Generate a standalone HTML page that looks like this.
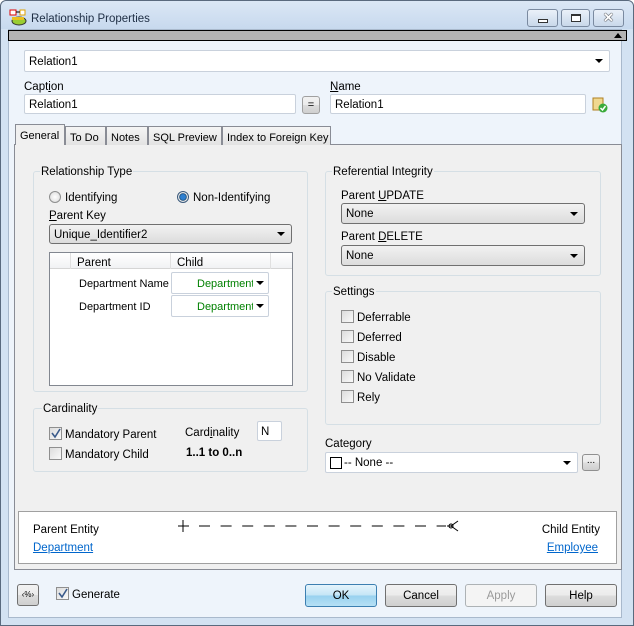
<!DOCTYPE html>
<html><head><meta charset="utf-8"><style>
*{box-sizing:border-box;margin:0;padding:0}
body{width:634px;height:626px;overflow:hidden;font-family:"Liberation Sans",sans-serif;font-size:11.5px;color:#000;background:#fff;white-space:nowrap}
.a{position:absolute}
.win{left:0;top:0;width:634px;height:626px;background:#d3e2f2;border:1px solid #5a6a7e;border-radius:6px 6px 0 0}
.client{left:8px;top:29px;width:614px;height:589px;background:#eef4fb;border:1px solid #a9b9cc}
.tb{border:1px solid #7a8aa0;border-radius:3px;background:linear-gradient(#eaf1f9,#c9d8ea);}
.inp{background:#fff;border:1px solid #c9d1dc;border-radius:2px;padding:4px 4px 0;line-height:13px}
.cb{background:linear-gradient(#f2f2f2,#dcdcdc);border:1px solid #707070;border-radius:3px;padding:4px 4px 0;line-height:12px}
.arr{position:absolute;right:6px;top:50%;margin-top:-2px;width:0;height:0;border-left:4px solid transparent;border-right:4px solid transparent;border-top:4px solid #000}
.grp{border:1px solid #d5dfe5;border-radius:3px}
.gl{background:#f0f0f0;padding:0 1px;line-height:13px}
.chk{width:13px;height:13px;border:1px solid #8f8f8f;background:linear-gradient(135deg,#dcdcdc,#fafafa)}
.btn{border:1px solid #707070;border-radius:3px;background:linear-gradient(#f2f2f2 0,#ebebeb 50%,#dddddd 51%,#cfcfcf);text-align:center;line-height:20px}
.tab{top:126px;height:19px;border:1px solid #898c95;border-bottom:none;background:linear-gradient(#f5f5f5,#e3e3e3);padding:4px 0 0 4px;line-height:14px;overflow:hidden;font-size:11px}
.t{margin-top:1px}
u{text-decoration:underline}
</style></head><body>
<div class="a win"></div>
<div class="a" style="left:1px;top:1px;width:632px;height:28px;background:linear-gradient(#dbe7f5,#c7d9ee);border-radius:6px 6px 0 0"></div>
<svg class="a" style="left:9px;top:9px" width="18" height="18" viewBox="0 0 18 18"><rect x="1" y="1" width="6" height="5" fill="#fff" stroke="#d00"/><rect x="11" y="1" width="5" height="5" fill="#fff" stroke="#e0a000"/><path d="M7 3h4" stroke="#000"/><ellipse cx="10" cy="12" rx="7" ry="4" fill="#9acd32" stroke="#333"/><rect x="3" y="8" width="12" height="3" fill="#e8c020"/></svg>
<div class="a" style="left:31px;top:13px;color:#1e2e44">Relationship Properties</div>
<div class="a tb" style="left:527px;top:9px;width:31px;height:18px"><div class="a" style="left:10px;top:9px;width:10px;height:4px;border:1px solid #333;background:#fff"></div></div>
<div class="a tb" style="left:561px;top:9px;width:29px;height:18px"><div class="a" style="left:9px;top:4px;width:10px;height:8px;border:1px solid #333;border-top-width:2px;background:#fff"></div></div>
<div class="a tb" style="left:593px;top:9px;width:31px;height:18px;text-align:center;font-weight:bold;font-size:13px;line-height:15px;color:#fff;text-shadow:0 0 1px #000,0 0 1px #000">✕</div>
<div class="a client"></div>
<div class="a" style="left:8px;top:30px;width:619px;height:11px;background:#b4b4b4;border:1px solid #000"><div class="a" style="right:4px;top:2px;width:0;height:0;border-left:4px solid transparent;border-right:4px solid transparent;border-bottom:5px solid #000"></div></div>

<div class="a inp" style="left:24px;top:50px;width:586px;height:22px;padding-top:5px">Relation1<div class="arr"></div></div>
<div class="a" style="left:24px;top:81px">Capt<u>i</u>on</div>
<div class="a inp" style="left:24px;top:94px;width:272px;height:20px">Relation1</div>
<div class="a btn" style="left:302px;top:96px;width:18px;height:18px;line-height:16px;font-size:11px;border-color:#a0a0a0">=</div>
<div class="a" style="left:330px;top:81px"><u>N</u>ame</div>
<div class="a inp" style="left:330px;top:94px;width:256px;height:20px">Relation1</div>
<svg class="a" style="left:592px;top:97px" width="16" height="16"><rect x="1" y="1" width="10" height="12" fill="#f0d890" stroke="#b08020"/><circle cx="11" cy="11" r="4.5" fill="#3aaa3a"/><path d="M8.5 11l2 2 3-4" stroke="#fff" stroke-width="1.5" fill="none"/></svg>

<div class="a" style="left:14px;top:144px;width:608px;height:426px;background:#f0f0f0;border:1px solid #898c95"></div>
<div class="a tab" style="left:65px;width:41px">To Do</div>
<div class="a tab" style="left:106px;width:42px">Notes</div>
<div class="a tab" style="left:148px;width:74px">SQL Preview</div>
<div class="a tab" style="left:222px;width:109px">Index to Foreign Key</div>
<div class="a tab" style="left:15px;top:124px;width:50px;height:21px;background:#f0f0f0">General</div>

<div class="a grp" style="left:33px;top:171px;width:275px;height:221px"></div>
<div class="a gl" style="left:40px;top:166px">Relationship Type</div>
<div class="a" style="left:49px;top:191px;width:12px;height:12px;border-radius:50%;border:1px solid #8e8f8f;background:radial-gradient(#fff,#d8d8d8)"></div>
<div class="a" style="left:65px;top:192px">Identifying</div>
<div class="a" style="left:177px;top:191px;width:12px;height:12px;border-radius:50%;border:1px solid #3c5b7d;background:radial-gradient(#2e7fd0 0 2.5px,#16456e 3.5px,#e8e8e8 4px)"></div>
<div class="a" style="left:193px;top:192px">Non-Identifying</div>
<div class="a" style="left:49px;top:210px"><u>P</u>arent Key</div>
<div class="a cb" style="left:49px;top:224px;width:243px;height:20px">Unique_Identifier2<div class="arr"></div></div>
<div class="a" style="left:49px;top:252px;width:244px;height:134px;background:#fff;border:1px solid #828790"></div>
<div class="a" style="left:50px;top:253px;width:242px;height:16px;background:linear-gradient(#fff,#f1f2f4);border-bottom:1px solid #d5d5d5"></div>
<div class="a" style="left:70px;top:253px;width:1px;height:16px;background:#e0e0e0"></div>
<div class="a" style="left:170px;top:253px;width:1px;height:16px;background:#e0e0e0"></div>
<div class="a" style="left:270px;top:253px;width:1px;height:16px;background:#e0e0e0"></div>
<div class="a" style="left:77px;top:257px">Parent</div>
<div class="a" style="left:177px;top:257px">Child</div>
<div class="a" style="left:79px;top:278px;font-size:11px">Department Name</div>
<div class="a" style="left:79px;top:301px;font-size:11px">Department ID</div>
<div class="a inp" style="left:171px;top:272px;width:98px;height:22px;color:#008000;padding:5px 0 0 25px;overflow:hidden;font-size:11px">Department<div class="arr" style="right:4px;box-shadow:0 0 0 3px #fff"></div></div>
<div class="a inp" style="left:171px;top:295px;width:98px;height:22px;color:#008000;padding:5px 0 0 25px;overflow:hidden;font-size:11px">Department<div class="arr" style="right:4px;box-shadow:0 0 0 3px #fff"></div></div>

<div class="a grp" style="left:33px;top:408px;width:275px;height:64px"></div>
<div class="a gl" style="left:42px;top:403px">Cardinality</div>
<div class="a chk" style="left:49px;top:427px"></div><svg class="a" style="left:50px;top:428px" width="11" height="11"><path d="M2 5l3 4 5-8" stroke="#3a5a8a" stroke-width="1.6" fill="none"/></svg>
<div class="a" style="left:65px;top:429px">Mandatory Parent</div>
<div class="a chk" style="left:49px;top:447px"></div>
<div class="a" style="left:65px;top:449px">Mandatory Child</div>
<div class="a" style="left:185px;top:427px">Card<u>i</u>nality</div>
<div class="a inp" style="left:257px;top:421px;width:25px;height:20px;padding-left:3px">N</div>
<div class="a" style="left:186px;top:447px;font-weight:bold">1..1 to 0..n</div>

<div class="a grp" style="left:325px;top:171px;width:276px;height:105px"></div>
<div class="a gl" style="left:332px;top:166px">Referential Integrity</div>
<div class="a" style="left:341px;top:190px">Parent <u>U</u>PDATE</div>
<div class="a cb" style="left:341px;top:203px;width:244px;height:21px">None<div class="arr"></div></div>
<div class="a" style="left:341px;top:231px">Parent <u>D</u>ELETE</div>
<div class="a cb" style="left:341px;top:245px;width:244px;height:21px">None<div class="arr"></div></div>

<div class="a grp" style="left:325px;top:291px;width:276px;height:134px"></div>
<div class="a gl" style="left:332px;top:286px">Settings</div>
<div class="a chk" style="left:341px;top:310px"></div><div class="a" style="left:357px;top:312px">Deferrable</div>
<div class="a chk" style="left:341px;top:330px"></div><div class="a" style="left:357px;top:332px">Deferred</div>
<div class="a chk" style="left:341px;top:350px"></div><div class="a" style="left:357px;top:352px">Disable</div>
<div class="a chk" style="left:341px;top:370px"></div><div class="a" style="left:357px;top:372px">No Validate</div>
<div class="a chk" style="left:341px;top:390px"></div><div class="a" style="left:357px;top:392px">Rely</div>

<div class="a" style="left:325px;top:438px">Category</div>
<div class="a inp" style="left:325px;top:452px;width:253px;height:21px;padding:4px 0 0 18px">-- None --<div class="a" style="left:4px;top:4px;width:12px;height:12px;border:1px solid #000"></div><div class="arr"></div></div>
<div class="a btn" style="left:582px;top:454px;width:18px;height:17px;line-height:12px;font-size:10px;border-color:#909090">...</div>

<div class="a" style="left:18px;top:511px;width:599px;height:53px;background:#fff;border:1px solid #a0a0a0"></div>
<div class="a" style="left:33px;top:524px">Parent Entity</div>
<div class="a" style="left:33px;top:542px;color:#0066cc;text-decoration:underline">Department</div>
<div class="a" style="right:34px;top:524px">Child Entity</div>
<div class="a" style="right:36px;top:542px;color:#0066cc;text-decoration:underline">Employee</div>
<svg class="a" style="left:176px;top:518px" width="286" height="14"><path d="M7 2v12M2 8h11" stroke="#000"/><path d="M23 8H270" stroke="#000" stroke-dasharray="11 10.6"/><path d="M271 8h4M282 3l-7 5 7 5" stroke="#000" fill="none"/><circle cx="275" cy="8" r="2" fill="none" stroke="#000"/></svg>

<div class="a btn" style="left:17px;top:584px;width:22px;height:22px;font-size:8px">‹%›</div>
<div class="a chk" style="left:56px;top:587px"></div><svg class="a" style="left:57px;top:588px" width="11" height="11"><path d="M2 5l3 4 5-8" stroke="#3a5a8a" stroke-width="1.6" fill="none"/></svg>
<div class="a" style="left:72px;top:589px">Generate</div>
<div class="a btn" style="left:305px;top:584px;width:72px;height:23px;border-color:#3c7fb1;background:linear-gradient(#e5f4fc,#c4e5f6 50%,#98d1ef 51%,#b6e0f5);line-height:22px">OK</div>
<div class="a btn" style="left:385px;top:584px;width:72px;height:23px;line-height:22px">Cancel</div>
<div class="a btn" style="left:465px;top:584px;width:72px;height:23px;line-height:22px;color:#9a9a9a;border-color:#adb2b5;background:#f4f4f4">Apply</div>
<div class="a btn" style="left:545px;top:584px;width:72px;height:23px;line-height:22px">Help</div>
</body></html>
